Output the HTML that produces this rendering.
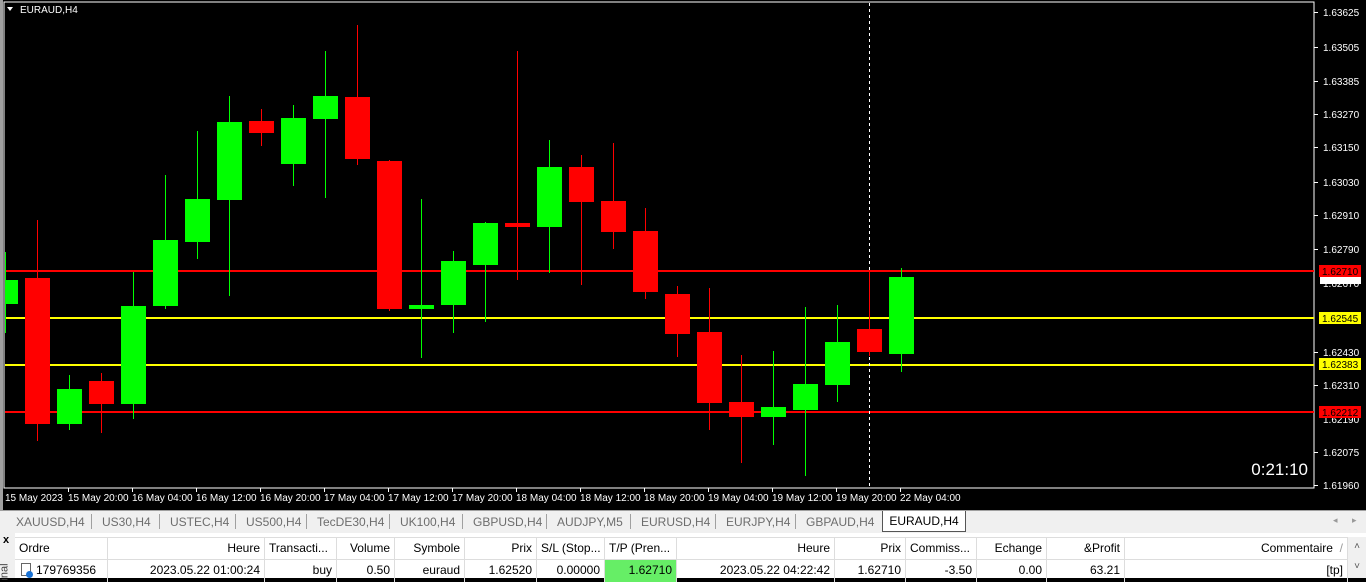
<!DOCTYPE html>
<html><head><meta charset="utf-8"><style>
*{margin:0;padding:0;box-sizing:border-box}
body{width:1366px;height:578px;overflow:hidden;background:#000;font-family:"Liberation Sans",sans-serif;position:relative}
svg{position:absolute;left:0;top:0}
.tabs{position:absolute;left:0;top:510px;width:1366px;height:23px;background:#f0f0f0;border-top:1px solid #a0a0a0;font-size:12px;color:#6d6d6d}
.tab{position:absolute;top:4px}
.sep{position:absolute;top:3px;width:1px;height:15px;background:#a0a0a0}
.act{position:absolute;left:882px;top:0;width:84px;height:21px;background:#fff;border:1px solid #555;border-top:none;color:#000;text-align:center;padding-top:3px}
.panel{position:absolute;left:0;top:533px;width:1366px;height:45px;background:#fff}
.side{position:absolute;left:0;top:0;width:15px;height:45px;background:#f0f0f0}
.hdr,.row{position:absolute;left:15px;width:1333px;height:22px;font-size:12px;color:#000}
.hdr{top:4px;background:#fff;border-top:1px solid #ddd}
.row{top:26px;border-top:1px solid #ddd}
.c{position:absolute;top:0;height:22px;line-height:20px;border-right:1px solid #ddd;padding:0 4px;white-space:nowrap;overflow:hidden}
.r{text-align:right}
</style></head><body>
<svg width="1366" height="510" viewBox="0 0 1366 510">
<rect x="0" y="0" width="1366" height="510" fill="#000"/>
<rect x="0" y="0" width="3" height="510" fill="#a0a0a0"/>
<rect x="4" y="2" width="1310" height="486" fill="none" stroke="#fff" stroke-width="1"/>
<g font-size="10" fill="#fff" font-family="Liberation Sans,sans-serif">
<polygon points="7,7 13,7 10,11" fill="#fff"/>
<text x="20" y="13">EURAUD,H4</text>
</g>
<!-- horizontal lines -->
<rect x="5" y="270" width="1309" height="2" fill="#f00"/>
<rect x="5" y="317" width="1309" height="2" fill="#ff0"/>
<rect x="5" y="364" width="1309" height="2" fill="#ff0"/>
<rect x="5" y="411" width="1309" height="2" fill="#f00"/>
<line x1="869.5" y1="3" x2="869.5" y2="487" stroke="#fff" stroke-dasharray="3,3"/>
<g>
<!-- c1 partial -->
<rect x="5" y="252" width="1" height="81" fill="#0f0"/><rect x="5" y="280" width="13" height="24" fill="#0f0"/>
</g>
<g id="c"></g>
<g>
<!-- candles: wick then body -->
<rect x="37" y="220" width="1" height="221" fill="#f00"/><rect x="25" y="278" width="25" height="146" fill="#f00"/>
<rect x="69" y="375" width="1" height="55" fill="#0f0"/><rect x="57" y="389" width="25" height="35" fill="#0f0"/>
<rect x="101" y="373" width="1" height="60" fill="#f00"/><rect x="89" y="381" width="25" height="23" fill="#f00"/>
<rect x="133" y="272" width="1" height="147" fill="#0f0"/><rect x="121" y="306" width="25" height="98" fill="#0f0"/>
<rect x="165" y="175" width="1" height="134" fill="#0f0"/><rect x="153" y="240" width="25" height="66" fill="#0f0"/>
<rect x="197" y="131" width="1" height="128" fill="#0f0"/><rect x="185" y="199" width="25" height="43" fill="#0f0"/>
<rect x="229" y="96" width="1" height="200" fill="#0f0"/><rect x="217" y="122" width="25" height="78" fill="#0f0"/>
<rect x="261" y="109" width="1" height="37" fill="#f00"/><rect x="249" y="121" width="25" height="12" fill="#f00"/>
<rect x="293" y="105" width="1" height="81" fill="#0f0"/><rect x="281" y="118" width="25" height="46" fill="#0f0"/>
<rect x="325" y="51" width="1" height="147" fill="#0f0"/><rect x="313" y="96" width="25" height="23" fill="#0f0"/>
<rect x="357" y="25" width="1" height="140" fill="#f00"/><rect x="345" y="97" width="25" height="62" fill="#f00"/>
<rect x="389" y="160" width="1" height="151" fill="#f00"/><rect x="377" y="161" width="25" height="148" fill="#f00"/>
<rect x="421" y="199" width="1" height="159" fill="#0f0"/><rect x="409" y="305" width="25" height="4" fill="#0f0"/>
<rect x="453" y="251" width="1" height="82" fill="#0f0"/><rect x="441" y="261" width="25" height="44" fill="#0f0"/>
<rect x="485" y="222" width="1" height="100" fill="#0f0"/><rect x="473" y="223" width="25" height="42" fill="#0f0"/>
<rect x="517" y="51" width="1" height="229" fill="#f00"/><rect x="505" y="223" width="25" height="4" fill="#f00"/>
<rect x="549" y="140" width="1" height="133" fill="#0f0"/><rect x="537" y="167" width="25" height="60" fill="#0f0"/>
<rect x="581" y="155" width="1" height="130" fill="#f00"/><rect x="569" y="167" width="25" height="35" fill="#f00"/>
<rect x="613" y="143" width="1" height="106" fill="#f00"/><rect x="601" y="201" width="25" height="31" fill="#f00"/>
<rect x="645" y="208" width="1" height="91" fill="#f00"/><rect x="633" y="231" width="25" height="61" fill="#f00"/>
<rect x="677" y="286" width="1" height="71" fill="#f00"/><rect x="665" y="294" width="25" height="40" fill="#f00"/>
<rect x="709" y="288" width="1" height="142" fill="#f00"/><rect x="697" y="332" width="25" height="71" fill="#f00"/>
<rect x="741" y="355" width="1" height="108" fill="#f00"/><rect x="729" y="402" width="25" height="15" fill="#f00"/>
<rect x="773" y="351" width="1" height="94" fill="#0f0"/><rect x="761" y="407" width="25" height="10" fill="#0f0"/>
<rect x="805" y="307" width="1" height="169" fill="#0f0"/><rect x="793" y="384" width="25" height="26" fill="#0f0"/>
<rect x="837" y="305" width="1" height="97" fill="#0f0"/><rect x="825" y="342" width="25" height="43" fill="#0f0"/>
<rect x="869" y="270" width="1" height="86" fill="#f00"/><rect x="857" y="329" width="25" height="23" fill="#f00"/>
<rect x="901" y="268" width="1" height="104" fill="#0f0"/><rect x="889" y="277" width="25" height="77" fill="#0f0"/>
</g>
<text x="1308" y="475" font-size="17" fill="#fff" text-anchor="end" font-family="Liberation Sans,sans-serif">0:21:10</text>
<g font-size="10" fill="#fff" font-family="Liberation Sans,sans-serif">
<g stroke="#fff"><line x1="1314" y1="12.5" x2="1318" y2="12.5"/><line x1="1314" y1="47.5" x2="1318" y2="47.5"/><line x1="1314" y1="81.5" x2="1318" y2="81.5"/><line x1="1314" y1="114.5" x2="1318" y2="114.5"/><line x1="1314" y1="147.5" x2="1318" y2="147.5"/><line x1="1314" y1="182.5" x2="1318" y2="182.5"/><line x1="1314" y1="215.5" x2="1318" y2="215.5"/><line x1="1314" y1="249.5" x2="1318" y2="249.5"/><line x1="1314" y1="352.5" x2="1318" y2="352.5"/><line x1="1314" y1="385.5" x2="1318" y2="385.5"/><line x1="1314" y1="452.5" x2="1318" y2="452.5"/><line x1="1314" y1="485.5" x2="1318" y2="485.5"/></g>
<text x="1323" y="16">1.63625</text><text x="1323" y="51">1.63505</text><text x="1323" y="85">1.63385</text><text x="1323" y="118">1.63270</text><text x="1323" y="151">1.63150</text><text x="1323" y="186">1.63030</text><text x="1323" y="219">1.62910</text><text x="1323" y="253">1.62790</text><text x="1323" y="287">1.62670</text><text x="1323" y="356">1.62430</text><text x="1323" y="389">1.62310</text><text x="1323" y="423">1.62190</text><text x="1323" y="456">1.62075</text><text x="1323" y="489">1.61960</text>
<rect x="1320" y="277" width="41" height="7" fill="#fff"/>
<rect x="1319" y="265" width="42" height="12" fill="#f00"/><text x="1322" y="275" fill="#000">1.62710</text>
<rect x="1319" y="312" width="42" height="12" fill="#ff0"/><text x="1322" y="322" fill="#000">1.62545</text>
<rect x="1319" y="358" width="42" height="12" fill="#ff0"/><text x="1322" y="368" fill="#000">1.62383</text>
<rect x="1319" y="406" width="42" height="12" fill="#f00"/><text x="1322" y="416" fill="#000">1.62212</text>
</g>
<g stroke="#fff"><line x1="68.5" y1="488" x2="68.5" y2="492"/><line x1="132.5" y1="488" x2="132.5" y2="492"/><line x1="196.5" y1="488" x2="196.5" y2="492"/><line x1="260.5" y1="488" x2="260.5" y2="492"/><line x1="324.5" y1="488" x2="324.5" y2="492"/><line x1="388.5" y1="488" x2="388.5" y2="492"/><line x1="452.5" y1="488" x2="452.5" y2="492"/><line x1="516.5" y1="488" x2="516.5" y2="492"/><line x1="580.5" y1="488" x2="580.5" y2="492"/><line x1="644.5" y1="488" x2="644.5" y2="492"/><line x1="708.5" y1="488" x2="708.5" y2="492"/><line x1="772.5" y1="488" x2="772.5" y2="492"/><line x1="836.5" y1="488" x2="836.5" y2="492"/><line x1="900.5" y1="488" x2="900.5" y2="492"/></g>
<g font-size="10" fill="#fff" font-family="Liberation Sans,sans-serif">
<text x="5" y="501">15 May 2023</text><text x="68" y="501">15 May 20:00</text><text x="132" y="501">16 May 04:00</text><text x="196" y="501">16 May 12:00</text><text x="260" y="501">16 May 20:00</text><text x="324" y="501">17 May 04:00</text><text x="388" y="501">17 May 12:00</text><text x="452" y="501">17 May 20:00</text><text x="516" y="501">18 May 04:00</text><text x="580" y="501">18 May 12:00</text><text x="644" y="501">18 May 20:00</text><text x="708" y="501">19 May 04:00</text><text x="772" y="501">19 May 12:00</text><text x="836" y="501">19 May 20:00</text><text x="900" y="501">22 May 04:00</text>
</g>
</svg>
<div class="tabs">
<span class="tab" style="left:16px">XAUUSD,H4</span><i class="sep" style="left:91px"></i>
<span class="tab" style="left:102px">US30,H4</span><i class="sep" style="left:159px"></i>
<span class="tab" style="left:170px">USTEC,H4</span><i class="sep" style="left:235px"></i>
<span class="tab" style="left:246px">US500,H4</span><i class="sep" style="left:306px"></i>
<span class="tab" style="left:317px">TecDE30,H4</span><i class="sep" style="left:389px"></i>
<span class="tab" style="left:400px">UK100,H4</span><i class="sep" style="left:462px"></i>
<span class="tab" style="left:473px">GBPUSD,H4</span><i class="sep" style="left:546px"></i>
<span class="tab" style="left:557px">AUDJPY,M5</span><i class="sep" style="left:630px"></i>
<span class="tab" style="left:641px">EURUSD,H4</span><i class="sep" style="left:715px"></i>
<span class="tab" style="left:726px">EURJPY,H4</span><i class="sep" style="left:795px"></i>
<span class="tab" style="left:806px">GBPAUD,H4</span>
<div class="act">EURAUD,H4</div>
<span class="tab" style="left:1333px;font-size:9px;color:#999">◂</span><span class="tab" style="left:1352px;font-size:9px;color:#999">▸</span>
</div>
<div class="panel">
<div class="side"><span style="position:absolute;left:3px;top:1px;font-size:11px;font-weight:bold">x</span><span style="position:absolute;left:-4px;top:33px;font-size:11px;color:#444;transform:rotate(-90deg)">inal</span></div>
<div class="hdr">
<div class="c" style="left:0;width:93px">Ordre</div>
<div class="c r" style="left:93px;width:157px">Heure</div>
<div class="c" style="left:250px;width:72px">Transacti...</div>
<div class="c r" style="left:322px;width:58px">Volume</div>
<div class="c r" style="left:380px;width:70px">Symbole</div>
<div class="c r" style="left:450px;width:72px">Prix</div>
<div class="c" style="left:522px;width:68px">S/L (Stop...</div>
<div class="c" style="left:590px;width:72px">T/P (Pren...</div>
<div class="c r" style="left:662px;width:158px">Heure</div>
<div class="c r" style="left:820px;width:71px">Prix</div>
<div class="c" style="left:891px;width:71px">Commiss...</div>
<div class="c r" style="left:962px;width:70px">Echange</div>
<div class="c r" style="left:1032px;width:78px">&amp;Profit</div>
<div class="c r" style="left:1110px;width:223px">Commentaire &nbsp;<span style="color:#999">/</span></div>
</div>
<div class="row">
<div class="c" style="left:0;width:93px;padding-left:6px"><span style="display:inline-block;width:10px;height:13px;border:1px solid #666;vertical-align:-2px;margin-right:5px;position:relative"><i style="position:absolute;right:-3px;bottom:-3px;width:7px;height:7px;border-radius:50%;background:#1a73d6"></i></span>179769356</div>
<div class="c r" style="left:93px;width:157px">2023.05.22 01:00:24</div>
<div class="c r" style="left:250px;width:72px">buy</div>
<div class="c r" style="left:322px;width:58px">0.50</div>
<div class="c r" style="left:380px;width:70px">euraud</div>
<div class="c r" style="left:450px;width:72px">1.62520</div>
<div class="c r" style="left:522px;width:68px">0.00000</div>
<div class="c r" style="left:590px;width:72px;background:#66ee66">1.62710</div>
<div class="c r" style="left:662px;width:158px">2023.05.22 04:22:42</div>
<div class="c r" style="left:820px;width:71px">1.62710</div>
<div class="c r" style="left:891px;width:71px">-3.50</div>
<div class="c r" style="left:962px;width:70px">0.00</div>
<div class="c r" style="left:1032px;width:78px">63.21</div>
<div class="c r" style="left:1110px;width:223px">[tp]</div>
</div>
<div style="position:absolute;left:1348px;top:4px;width:18px;height:41px;background:#f0f0f0;font-size:10px;color:#555;text-align:center;line-height:20px">˄<br>˅</div>
</div>
</body></html>
